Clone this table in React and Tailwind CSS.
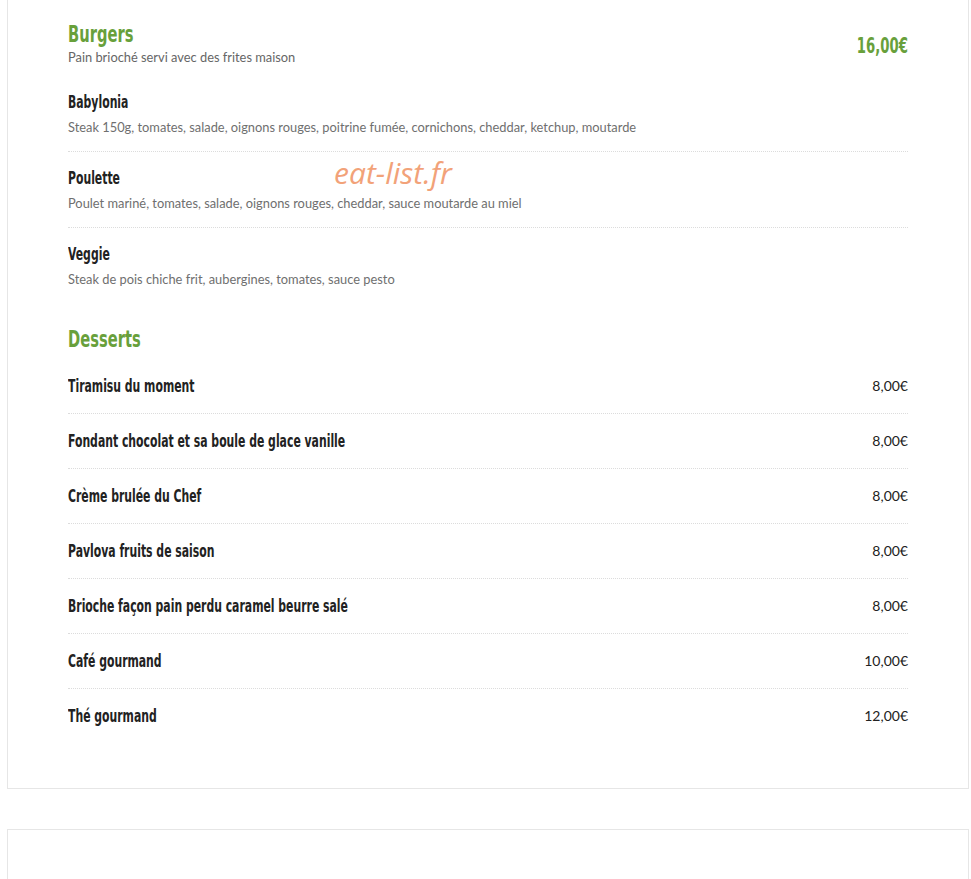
import React from "react";

// Oswald is not installed: a condensed bold face squeezed horizontally stands in for it
const heading = { fontFamily: '"DejaVu Sans Condensed", "Liberation Sans", sans-serif' };
const squeeze = "inline-block origin-left scale-x-[0.71] whitespace-nowrap";

const burgers = [
  { name: "Babylonia", desc: "Steak 150g, tomates, salade, oignons rouges, poitrine fumée, cornichons, cheddar, ketchup, moutarde" },
  { name: "Poulette", desc: "Poulet mariné, tomates, salade, oignons rouges, cheddar, sauce moutarde au miel" },
  { name: "Veggie", desc: "Steak de pois chiche frit, aubergines, tomates, sauce pesto" },
];

const desserts = [
  { name: "Tiramisu du moment", price: "8,00€" },
  { name: "Fondant chocolat et sa boule de glace vanille", price: "8,00€" },
  { name: "Crème brulée du Chef", price: "8,00€" },
  { name: "Pavlova fruits de saison", price: "8,00€" },
  { name: "Brioche façon pain perdu caramel beurre salé", price: "8,00€" },
  { name: "Café gourmand", price: "10,00€" },
  { name: "Thé gourmand", price: "12,00€" },
];

export default function App() {
  return (
    <div className="w-full min-h-screen bg-white pl-[7px] pr-[2px] font-['Lato',sans-serif]">
      {/* Menu card */}
      <div className="relative border border-t-0 border-[#e6e6e6] px-[60px] pt-[21px] pb-[45px]">
        {/* Burgers header */}
        <div className="flex items-center justify-between">
          <div>
            <h2 style={heading} className="text-[23px] leading-[26px] font-bold text-[#68a03b]">
              <span className={squeeze}>Burgers</span>
            </h2>
            <p className="mt-[1px] text-[12.85px] leading-[18px] text-[#666]">Pain brioché servi avec des frites maison</p>
          </div>
          <span style={heading} className="mt-[6px] text-[21px] font-bold text-[#68a03b] origin-right scale-x-[0.7] whitespace-nowrap">
            16,00€
          </span>
        </div>

        <ul className="mt-[10px]">
          {burgers.map((b, i) => (
            <li
              key={b.name}
              className={`py-[15px] ${i < burgers.length - 1 ? "border-b border-dotted border-[#dcdcdc]" : ""}`}
            >
              <h3 style={heading} className="text-[17px] leading-[22px] font-bold text-[#222]">
                <span className={squeeze}>{b.name}</span>
              </h3>
              <p className="mt-[5px] text-[12.85px] leading-[18px] text-[#6f6f6f]">{b.desc}</p>
            </li>
          ))}
        </ul>

        {/* Desserts */}
        <h2 style={heading} className="mt-[23px] text-[23px] leading-[26px] font-bold text-[#68a03b]">
          <span className={squeeze}>Desserts</span>
        </h2>
        <ul className="mt-[7px]">
          {desserts.map((d, i) => (
            <li
              key={d.name}
              className={`flex items-center justify-between py-[16px] ${i < desserts.length - 1 ? "border-b border-dotted border-[#dcdcdc]" : ""}`}
            >
              <span style={heading} className="text-[17px] leading-[22px] font-bold text-[#222]">
                <span className={squeeze}>{d.name}</span>
              </span>
              <span className="text-[14px] leading-[22px] text-[#222]">{d.price}</span>
            </li>
          ))}
        </ul>

        {/* Watermark */}
        <span className="absolute left-[326px] top-[154px] font-['Open_Sans',sans-serif] italic text-[30px] leading-[38px] text-[#f2a279]">
          eat-list.fr
        </span>
      </div>

      {/* Next card */}
      <div className="mt-[40px] h-[120px] border border-[#e6e6e6]" />
    </div>
  );
}
